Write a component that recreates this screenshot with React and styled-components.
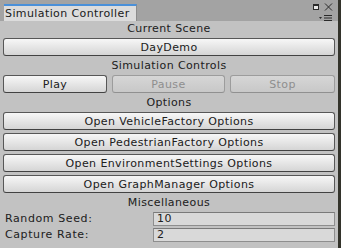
import React from 'react'
import styled, { createGlobalStyle } from 'styled-components';

const GlobalStyle = createGlobalStyle`
    html, body {
        margin: 0;
        padding: 0;
        background: #33332b;
    }
    body {
        font-family: "DejaVu Sans", Verdana, sans-serif;
        font-size: 11px;
        letter-spacing: 0.4px;
        color: #202020;
    }
`;

function App() {
    return (
        <>
            <GlobalStyle />
            <Window>
                <TabBar>
                    <Tab>Simulation Controller</Tab>
                    <WindowIcons>
                        <IconRow>
                            <svg width="6" height="6" viewBox="0 0 6 6">
                                <rect x="0.5" y="0.5" width="5" height="5" fill="#e8e8e8" stroke="#2a2a2a" />
                                <rect x="0" y="0" width="6" height="2" fill="#2a2a2a" />
                            </svg>
                            <svg width="9" height="8" viewBox="0 0 9 8">
                                <path d="M1 0.5 L8 7.5 M8 0.5 L1 7.5" stroke="#2a2a2a" strokeWidth="1" />
                            </svg>
                        </IconRow>
                        <svg width="14" height="6" viewBox="0 0 14 6">
                            <path d="M0 2 L3 2 L1.5 4 Z" fill="#2a2a2a" />
                            <path d="M5 0.5 H13 M5 3 H13 M5 5.5 H13" stroke="#2a2a2a" strokeWidth="1" />
                        </svg>
                    </WindowIcons>
                </TabBar>
                <Panel>
                    <SectionLabel $first>Current Scene</SectionLabel>
                    <Button>DayDemo</Button>

                    <SectionLabel>Simulation Controls</SectionLabel>
                    <ControlRow>
                        <Button>Play</Button>
                        <Button disabled>Pause</Button>
                        <Button disabled>Stop</Button>
                    </ControlRow>

                    <SectionLabel>Options</SectionLabel>
                    <ButtonStack>
                        <Button>Open VehicleFactory Options</Button>
                        <Button>Open PedestrianFactory Options</Button>
                        <Button>Open EnvironmentSettings Options</Button>
                        <Button>Open GraphManager Options</Button>
                    </ButtonStack>

                    <SectionLabel>Miscellaneous</SectionLabel>
                    <FieldStack>
                        <FieldRow>
                            <FieldLabel>Random Seed:</FieldLabel>
                            <Field>10</Field>
                        </FieldRow>
                        <FieldRow>
                            <FieldLabel>Capture Rate:</FieldLabel>
                            <Field>2</Field>
                        </FieldRow>
                    </FieldStack>
                </Panel>
            </Window>
        </>
    )
}

export default App

const Window = styled.div`
    width: 338px;
    height: 248px;
    display: flex;
    flex-direction: column;
    background-color: #c2c2c2;
`;
const TabBar = styled.div`
    height: 21px;
    display: flex;
    align-items: flex-end;
    justify-content: space-between;
    padding-left: 4px;
    background-color: #a3a3a3;
`;
const Tab = styled.div`
    width: 131px;
    height: 14px;
    padding: 1px 0 0 1px;
    line-height: 14px;
    border-top: 2px solid #4a90d9;
    border-right: 1px solid #8c8c8c;
    background-color: #dcdcdc;
    white-space: nowrap;
`;
const WindowIcons = styled.div`
    display: flex;
    flex-direction: column;
    align-items: flex-end;
    gap: 4px;
    align-self: flex-start;
    padding: 3px 5px 0 0;
`;
const IconRow = styled.div`
    display: flex;
    align-items: center;
    gap: 5px;
`;
const Panel = styled.div`
    flex: 1;
    display: flex;
    flex-direction: column;
    padding: 0 3px;
`;
const SectionLabel = styled.div`
    height: 16px;
    line-height: 16px;
    margin-top: ${props => props.$first ? '0' : '2px'};
    margin-bottom: 1px;
    text-align: center;
`;
const Button = styled.button`
    height: 18px;
    padding: 0;
    font-family: "DejaVu Sans", Verdana, sans-serif;
    font-size: 11px;
    letter-spacing: 0.4px;
    color: ${props => props.disabled ? '#8e8e8e' : '#202020'};
    border: 1px solid ${props => props.disabled ? '#9c9c9c' : '#575757'};
    border-bottom-color: ${props => props.disabled ? '#909090' : '#424242'};
    border-radius: 3px;
    background: ${props => props.disabled
        ? 'linear-gradient(#d6d6d6, #c8c8c8)'
        : 'linear-gradient(#f7f7f7, #d5d5d5)'};
    white-space: nowrap;
`;
const ControlRow = styled.div`
    display: grid;
    grid-template-columns: 104px 113px 105px;
    justify-content: space-between;
`;
const ButtonStack = styled.div`
    display: flex;
    flex-direction: column;
    gap: 3px;
`;
const FieldStack = styled.div`
    display: flex;
    flex-direction: column;
    gap: 2px;
`;
const FieldRow = styled.div`
    display: grid;
    grid-template-columns: 150px 1fr;
    align-items: center;
`;
const FieldLabel = styled.div`
    padding-left: 2px;
    line-height: 14px;
    letter-spacing: 0.6px;
`;
const Field = styled.div`
    height: 12px;
    line-height: 12px;
    padding-left: 3px;
    border: 1px solid #8e8e8e;
    border-top-color: #7a7a7a;
    background-color: #d9d9d9;
`;
